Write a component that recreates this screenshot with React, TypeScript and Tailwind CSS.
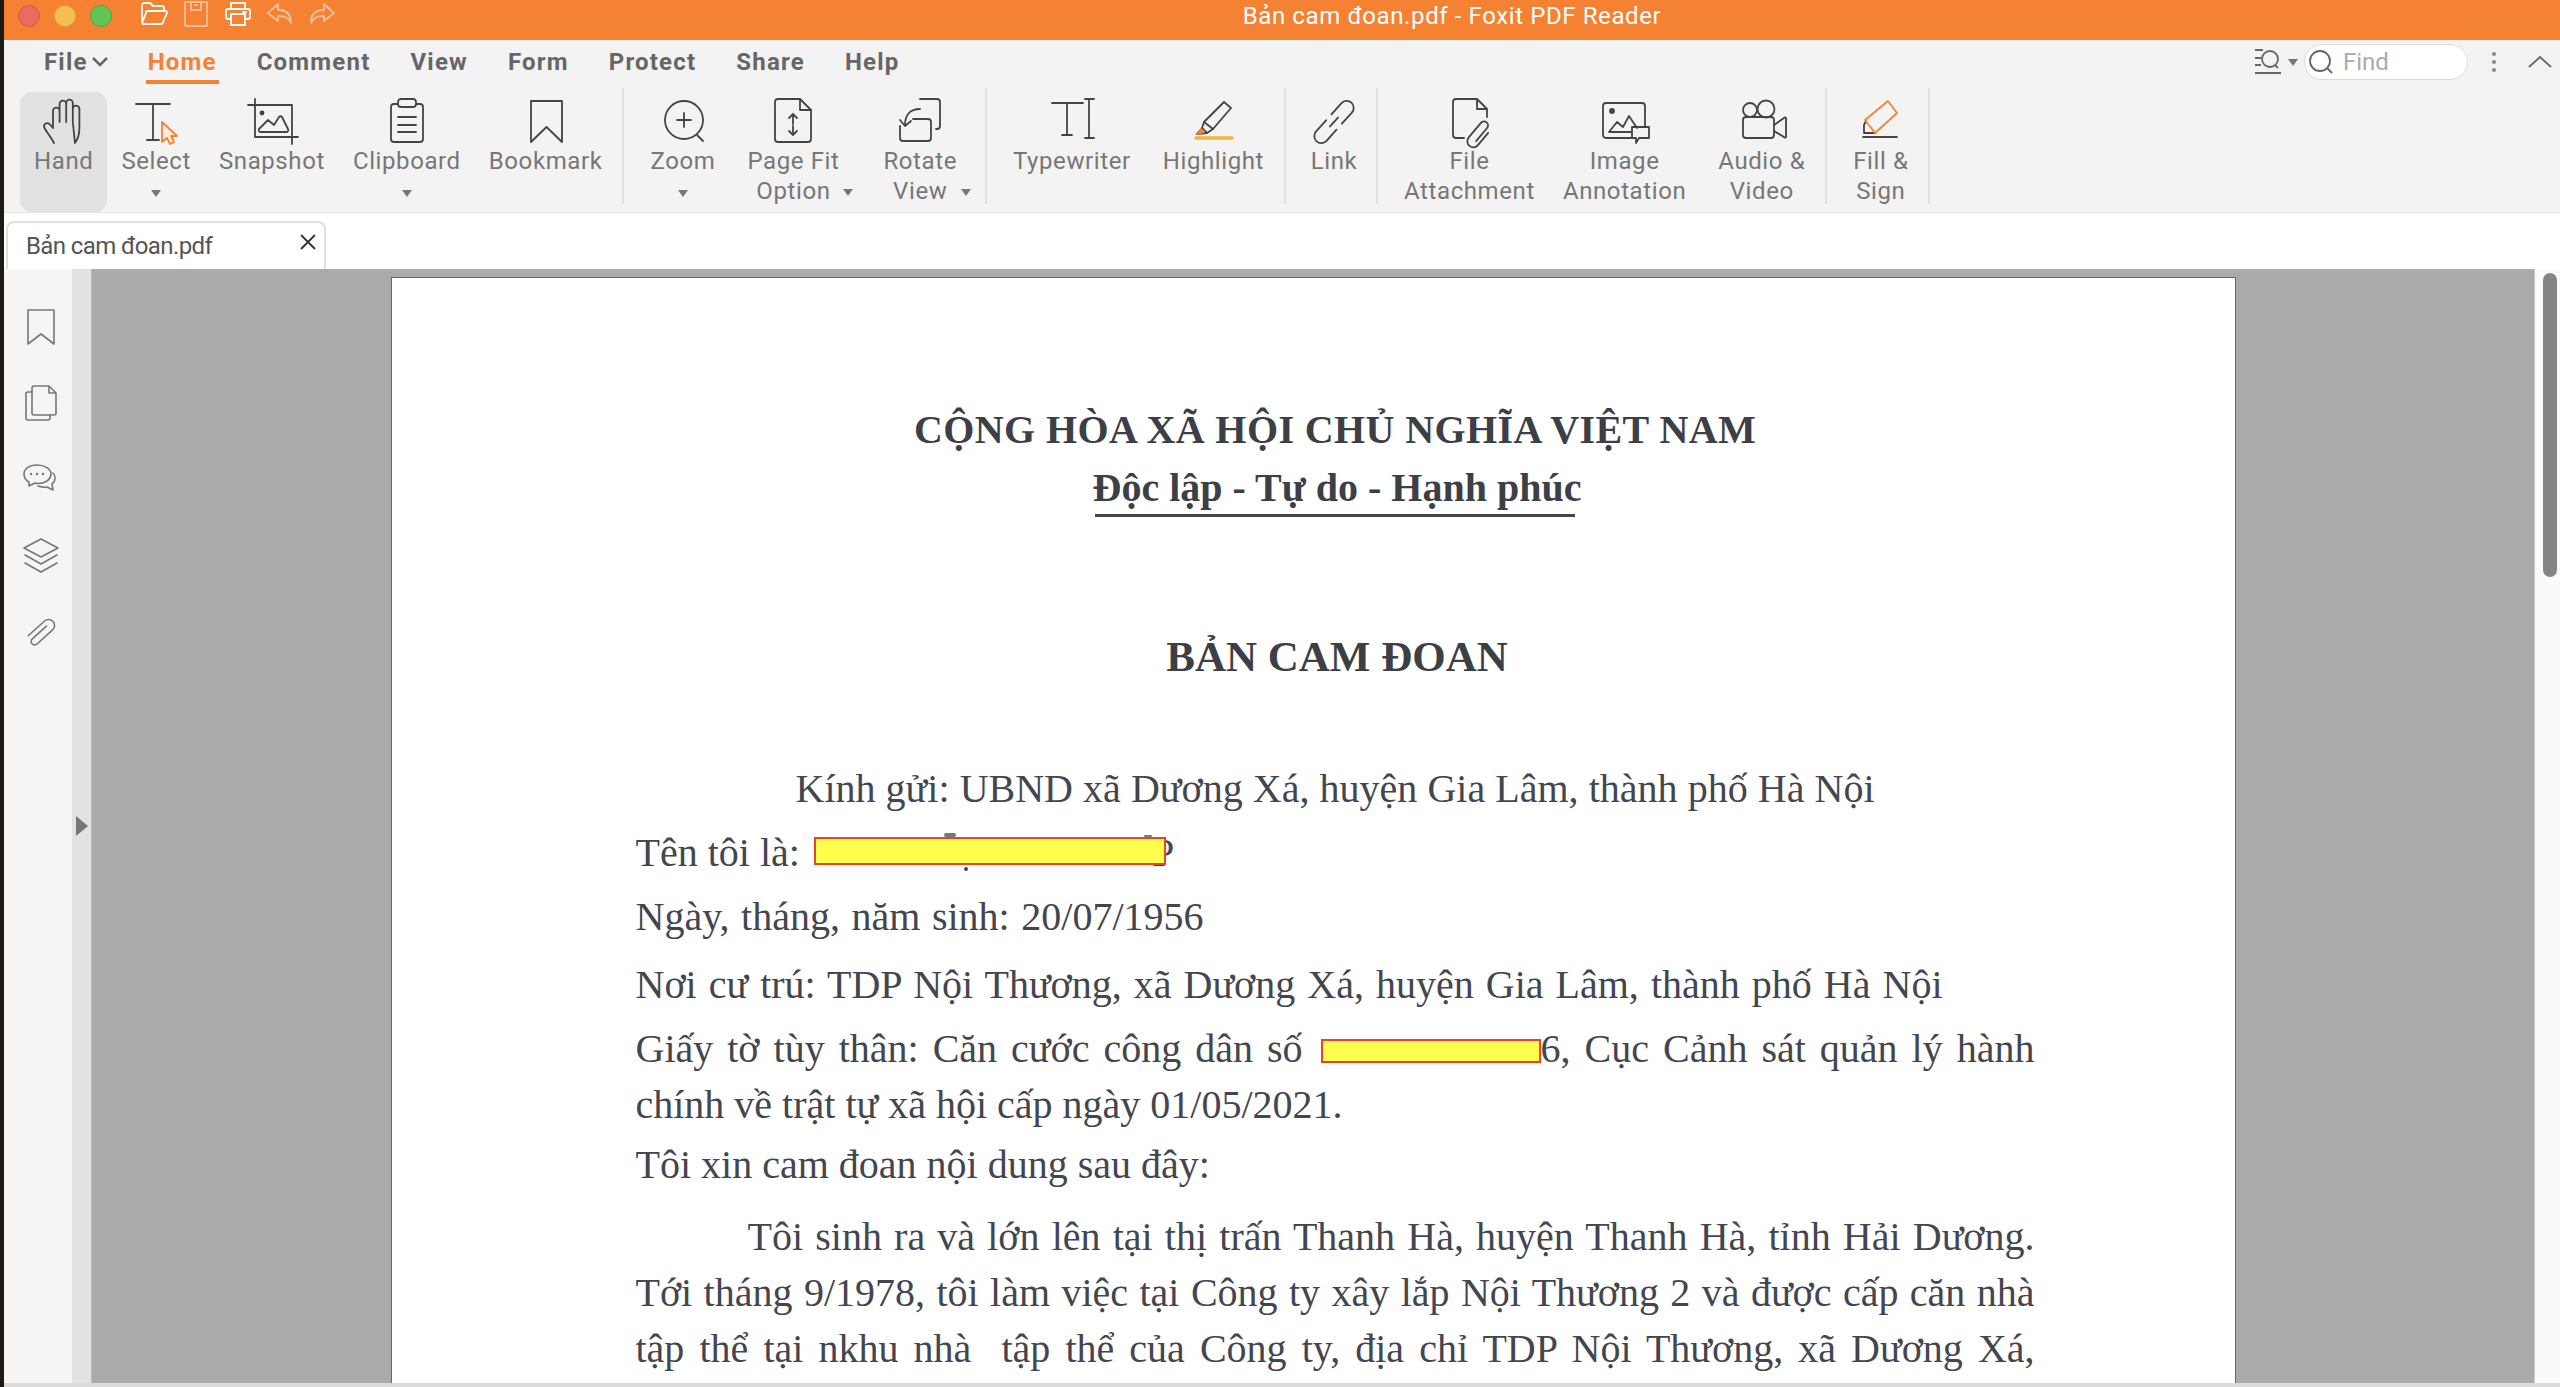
import type { ReactNode } from 'react'

const ORANGE = '#f58233'

function Icon({ children }: { children: ReactNode }) {
  return (
    <svg className="size-12 shrink-0 overflow-visible" viewBox="0 0 48 48" fill="none" stroke="#444" strokeWidth={1.8} strokeLinecap="round" strokeLinejoin="round">
      {children}
    </svg>
  )
}

function SideIcon({ children }: { children: ReactNode }) {
  return (
    <svg className="size-9 overflow-visible" viewBox="0 0 36 36" fill="none" stroke="#777" strokeWidth={1.6} strokeLinecap="round" strokeLinejoin="round">
      {children}
    </svg>
  )
}

function TitleIcon({ children, faded }: { children: ReactNode; faded?: boolean }) {
  return (
    <svg className={`size-7 ${faded ? 'opacity-50' : ''}`} viewBox="0 0 28 28" fill="none" stroke="#fff" strokeWidth={1.8} strokeLinecap="round" strokeLinejoin="round">
      {children}
    </svg>
  )
}

function Caret() {
  return (
    <svg className="h-2 w-2.5" viewBox="0 0 10 8" fill="#777">
      <path d="M0 1h10L5 8z" />
    </svg>
  )
}

type Tool = {
  lines: string[]
  icon: ReactNode
  caret?: 'below' | 'inline'
  active?: boolean
  className?: string
}

const TOOLS_A: Tool[] = [
  {
    lines: ['Hand'],
    active: true,
    icon: (
      <Icon>
        <path d="M14 45C11 39 7 35 4.5 30c-1.500-3 1.500-6.500 5-4l3.500 4V13a3.300 3.300 0 0 1 6.600 0v11M19.600 24V6a3.300 3.300 0 0 1 6.600 0v18M26.200 24V5a3.300 3.300 0 0 1 6.600 0v19M32.800 24V11a3.300 3.300 0 0 1 6.600 0v19c0 7-1.400 11-4.400 15z" />
      </Icon>
    ),
  },
  {
    lines: ['Select'],
    caret: 'below',
    icon: (
      <Icon>
        <path d="M4 6h34M21 6v36M15 42h12" />
        <path d="M30 24l15 14h-6l3 6-4 2-3-6-5 4z" stroke={ORANGE} fill="#fdeede" />
      </Icon>
    ),
  },
  {
    lines: ['Snapshot'],
    icon: (
      <Icon>
        <path d="M0 7h44v39M7 1v38h43" />
        <circle cx="14" cy="15" r="1.500" fill="#444" />
        <path d="M13 34a2 2 0 0 1-2-3l9-9 6 5 5-8c1-1 2-1 3 0l6 12a2 2 0 0 1-2 3z" />
      </Icon>
    ),
  },
  {
    lines: ['Clipboard'],
    caret: 'below',
    icon: (
      <Icon>
        <rect x="8" y="6" width="32" height="38" rx="3" />
        <rect x="15" y="1" width="18" height="8" rx="3" fill="#f3f3f3" />
        <path d="M15 19h18M15 27h18M15 34h18" />
      </Icon>
    ),
  },
  {
    lines: ['Bookmark'],
    icon: (
      <Icon>
        <path d="M9 3h31v41L24.500 29 9 44z" />
      </Icon>
    ),
  },
]

const TOOLS_B: Tool[] = [
  {
    lines: ['Zoom'],
    caret: 'below',
    icon: (
      <Icon>
        <circle cx="25" cy="22" r="19" />
        <path d="M25 15v14M18 22h14M38 37l6 6" />
      </Icon>
    ),
  },
  {
    lines: ['Page Fit', 'Option'],
    caret: 'inline',
    className: 'ml-1',
    icon: (
      <Icon>
        <path d="M9 1h22l11 11v29a3 3 0 0 1-3 3H9a3 3 0 0 1-3-3V4a3 3 0 0 1 3-3z" />
        <path d="M31 1v11h11M24 16v10M20 20l4-4 4 4M24 28v9M20 33l4 4 4-4" />
      </Icon>
    ),
  },
  {
    lines: ['Rotate', 'View'],
    caret: 'inline',
    className: 'ml-4 mr-2',
    icon: (
      <Icon>
        <path d="M24 1h17a3 3 0 0 1 3 3v24a3 3 0 0 1-3 3h-1" />
        <path d="M4 28v12a3 3 0 0 0 3 3h25a3 3 0 0 0 3-3V24a3 3 0 0 0-3-3H17" />
        <path d="M24 11C14 11 9 17 9 27M4 22l5 6 6-5" />
      </Icon>
    ),
  },
]

const TOOLS_C: Tool[] = [
  {
    lines: ['Typewriter'],
    icon: (
      <Icon>
        <path d="M4 5h31M19 5v32M14 37h10M41 1v39M37 1h9M37 40h9" />
      </Icon>
    ),
  },
  {
    lines: ['Highlight'],
    className: 'ml-1',
    icon: (
      <Icon>
        <path d="M35 4l7 6-18 21-9-7z" />
        <path d="M15 24l-2 6-5 6 10-1 6-4M13 30l5 5" />
        <path d="M9 36l3-5 3 3z" fill={ORANGE} stroke={ORANGE} />
        <path d="M7 40h36" stroke="#f6b13f" strokeWidth={3.500} />
      </Icon>
    ),
  },
]

const TOOLS_D: Tool[] = [
  {
    lines: ['Link'],
    className: '-mx-0.5',
    icon: (
      <Icon>
        <g transform="rotate(-48 24 24)">
          <path d="M20 17H5a7 7 0 0 0 0 14h15M28 17h15a7 7 0 0 1 0 14H28M18 24h12" />
        </g>
      </Icon>
    ),
  },
]

const TOOLS_E: Tool[] = [
  {
    lines: ['File', 'Attachment'],
    icon: (
      <Icon>
        <path d="M19 40h-8a3 3 0 0 1-3-3V4a3 3 0 0 1 3-3h21l10 10v8M32 1v10h10" />
        <g transform="rotate(-50 34 35)">
          <path d="M26 38h17a4 4 0 0 0 0-8H24a6 6 0 0 0 0 12h16" />
        </g>
      </Icon>
    ),
  },
  {
    lines: ['Image', 'Annotation'],
    icon: (
      <Icon>
        <path d="M30 40H5a3 3 0 0 1-3-3V8a3 3 0 0 1 3-3h36a3 3 0 0 1 3 3v20" />
        <circle cx="11" cy="13" r="2" fill="#444" />
        <path d="M8 34l8-10 6 5 6-11 8 12M8 34h22" />
        <path d="M31 29h17v11H38l-3 5v-5h-4z" />
      </Icon>
    ),
  },
  {
    lines: ['Audio &', 'Video'],
    className: 'ml-1',
    icon: (
      <Icon>
        <circle cx="12" cy="12" r="7" />
        <circle cx="28" cy="11" r="8.500" />
        <rect x="5" y="19" width="31" height="21" rx="3" />
        <path d="M36 27l10-7a1 1 0 0 1 2 1v17a1 1 0 0 1-2 1l-10-6" />
      </Icon>
    ),
  },
]

const TOOLS_F: Tool[] = [
  {
    lines: ['Fill &', 'Sign'],
    icon: (
      <Icon>
        <path d="M18 35H7v-8l2-4M6 39h34" />
        <path d="M31 3l9 12-22 20-10-13z" stroke={ORANGE} />
      </Icon>
    ),
  },
]

function ToolButton({ tool }: { tool: Tool }) {
  return (
    <div className={`flex h-30 flex-col items-center rounded-xl px-3.5 pt-1.5 ${tool.active ? 'bg-[#e2e2e2]' : ''} ${tool.className ?? ''}`}>
      {tool.icon}
      <div className="whitespace-nowrap text-center text-2xl leading-7.5 tracking-wide text-[#777]">
        {tool.lines.map((line, i) => (
          <div key={line} className="relative">
            {line}
            {tool.caret === 'inline' && i === 1 && (
              <span className="absolute left-full top-3 ml-1 flex">
                <Caret />
              </span>
            )}
          </div>
        ))}
        {tool.caret === 'below' && (
          <div className="flex h-7.5 items-center justify-center pt-1">
            <Caret />
          </div>
        )}
      </div>
    </div>
  )
}

function Divider() {
  return <div className="mb-2 ml-1.5 mr-3 mt-[-4px] h-29 w-0.5 self-start bg-[#e2e2e2]" />
}

function ToolGroup({ tools }: { tools: Tool[] }) {
  return (
    <>
      {tools.map(t => (
        <ToolButton key={t.lines[0]} tool={t} />
      ))}
    </>
  )
}

const Redacted = ({ className, children }: { className: string; children?: ReactNode }) => (
  <span className={`relative z-10 inline-block border-2 border-[#e8432b] bg-[#ffff4d] align-middle ${className}`}>{children}</span>
)

export default function App() {
  return (
    <div className="flex h-screen flex-col overflow-hidden bg-stone-900 pl-1 font-['Roboto',sans-serif]">
      {/* Title bar */}
      <div className="flex h-10 shrink-0 items-center bg-[#f58233] pb-2">
        <div className="flex items-center gap-3.5 pl-3.5">
          <span className="size-5.5 rounded-full border border-[#d9574c] bg-[#ee6a5f]" />
          <span className="size-5.5 rounded-full border border-[#d9a53f] bg-[#f5bf4f]" />
          <span className="size-5.5 rounded-full border border-[#4fa845] bg-[#61c454]" />
        </div>
        <div className="ml-7 flex items-center gap-3.5 pb-1">
          <TitleIcon>
            <path d="M2 21V5a2 2 0 0 1 2-2h6l3 3h9a2 2 0 0 1 2 2v3" />
            <path d="M2 23l4-10a2 2 0 0 1 2-2h17a2 2 0 0 1 2 2l-4 9a2 2 0 0 1-2 2H4a2 2 0 0 1-2-1z" />
          </TitleIcon>
          <TitleIcon faded>
            <rect x="3" y="2" width="22" height="24" rx="1" />
            <path d="M9 2v8h10V2M13 5h2" />
          </TitleIcon>
          <TitleIcon>
            <path d="M7 9V3h14v6M7 19H4a2 2 0 0 1-2-2v-6a2 2 0 0 1 2-2h20a2 2 0 0 1 2 2v6a2 2 0 0 1-2 2h-3" />
            <rect x="7" y="14" width="14" height="11" />
            <path d="M19 12h3" />
          </TitleIcon>
          <TitleIcon faded>
            <path d="M12 4L2 13l10 8v-5c6 0 10 1 13 7 0-8-4-13-13-13z" />
          </TitleIcon>
          <TitleIcon faded>
            <path d="M16 4l10 9-10 8v-5c-6 0-10 1-13 7 0-8 4-13 13-13z" />
          </TitleIcon>
        </div>
        <div className="ml-2 flex-1 text-center text-2xl tracking-wide text-[#fff]">Bản cam đoan.pdf - Foxit PDF Reader</div>
      </div>

      {/* Ribbon */}
      <div className="shrink-0 border-b border-[#e6e6e6] bg-[#f3f3f3]">
        <div className="flex h-13 items-center justify-between pb-2 pl-10 pr-2">
          <nav className="flex items-center gap-10 text-2xl font-bold tracking-wider text-[#666]">
            <span className="flex items-center gap-1">
              File
              <svg className="h-2.5 w-4" viewBox="0 0 16 10" fill="none" stroke="#666" strokeWidth={2.500}>
                <path d="M1 1l7 7 7-7" />
              </svg>
            </span>
            <span className="relative text-[#f58233]">
              Home
              <span className="absolute -inset-x-0.5 -bottom-1.5 h-1 bg-[#f58233]" />
            </span>
            <span>Comment</span>
            <span>View</span>
            <span>Form</span>
            <span>Protect</span>
            <span>Share</span>
            <span>Help</span>
          </nav>
          <div className="flex items-center">
            <svg className="size-7" viewBox="0 0 28 28" fill="none" stroke="#666" strokeWidth={1.800}>
              <path d="M1 2h8M1 10h6M1 17h6M1 25h26" />
              <circle cx="16" cy="11" r="8" />
              <path d="M21 17l3 3" />
            </svg>
            <span className="ml-1.5 flex">
              <Caret />
            </span>
            <div className="ml-1.5 flex h-9 w-41 items-center gap-2.5 rounded-full border border-[#dcdcdc] bg-white pl-1">
              <svg className="size-6" viewBox="0 0 24 24" fill="none" stroke="#666" strokeWidth={1.800}>
                <circle cx="11" cy="11" r="10" />
                <path d="M18 18l5 5" />
              </svg>
              <span className="text-2xl text-[#aaa]">Find</span>
            </div>
            <div className="ml-6 flex flex-col gap-1">
              <span className="size-1 rounded-full bg-[#888]" />
              <span className="size-1 rounded-full bg-[#888]" />
              <span className="size-1 rounded-full bg-[#888]" />
            </div>
            <svg className="ml-8 h-3 w-6" viewBox="0 0 24 12" fill="none" stroke="#666" strokeWidth={1.800}>
              <path d="M1 11L12 1l11 10" />
            </svg>
          </div>
        </div>
        <div className="flex h-30 pl-4">
          <ToolGroup tools={TOOLS_A} />
          <Divider />
          <ToolGroup tools={TOOLS_B} />
          <Divider />
          <ToolGroup tools={TOOLS_C} />
          <Divider />
          <ToolGroup tools={TOOLS_D} />
          <Divider />
          <ToolGroup tools={TOOLS_E} />
          <Divider />
          <ToolGroup tools={TOOLS_F} />
          <Divider />
        </div>
      </div>

      {/* Tabs */}
      <div className="flex h-14 shrink-0 bg-white pl-0.5 pt-2">
        <div className="flex w-80 items-center justify-between rounded-t-lg border-x-2 border-t-2 border-[#e0e0e0] bg-white pl-4.5 pr-2 text-2xl tracking-tight text-[#555]">
          <span>Bản cam đoan.pdf</span>
          <svg className="mb-2 size-4" viewBox="0 0 16 16" fill="none" stroke="#333" strokeWidth={1.800}>
            <path d="M1 1l14 14M15 1L1 15" />
          </svg>
        </div>
      </div>

      {/* Body */}
      <div className="flex min-h-0 flex-1 border-b-4 border-[#dcdcdc] bg-[#aaaaaa]">
        <aside className="flex w-17 shrink-0 flex-col items-center gap-10 bg-[#f5f5f5] pl-1.5 pt-10">
          <SideIcon>
            <path d="M5 1h26v34L18 25 5 35z" />
          </SideIcon>
          <SideIcon>
            <path d="M9 28V3a2 2 0 0 1 2-2h15l7 7v20a2 2 0 0 1-2 2H11a2 2 0 0 1-2-2zM26 1v7h7" />
            <path d="M9 7H5a2 2 0 0 0-2 2v24a2 2 0 0 0 2 2h20a2 2 0 0 0 2-2v-3" />
          </SideIcon>
          <SideIcon>
            <g transform="translate(0 -2)">
              <path d="M14 6C6 6 1 10 1 15c0 4 3 7 5 8v4l6-3c1 .5 2 .5 3 .5 8 0 13-4.500 13-9.500S22 6 14 6z" />
              <path d="M30 14c3 3 3 8-1 11l1 6-6-3c-3 .5-6 0-9-1" />
              <path d="M8 15h.01M14 15h.01M20 15h.01" strokeWidth={2.500} />
            </g>
          </SideIcon>
          <SideIcon>
            <path d="M18 2l17 9-17 9-17-9zM2 18l16 9 16-9M2 26l16 9 16-9" />
          </SideIcon>
          <SideIcon>
            <g transform="translate(0 4) rotate(-42 18 18)">
              <path d="M28 15H9a3.500 3.500 0 0 0 0 7h21a6 6 0 0 0 0-12H8" />
            </g>
          </SideIcon>
        </aside>
        <div className="flex w-5 shrink-0 items-center justify-center border-r border-[#bbb] bg-[#e2e2e2]">
          <svg className="h-5 w-3" viewBox="0 0 12 20" fill="#777">
            <path d="M0 0l12 10L0 20z" />
          </svg>
        </div>

        <main className="flex min-w-0 flex-1 justify-center overflow-hidden pt-2">
          <div className="w-[1845px] shrink-0 border-x border-t border-[#666] bg-white pl-61 pr-50 pt-33 font-['Liberation_Serif',serif] text-[40px] leading-10 text-[#44464f]">
            <div className="whitespace-nowrap text-center font-bold tracking-[0.01em] text-[#3d3f47]">CỘNG HÒA XÃ HỘI CHỦ NGHĨA VIỆT NAM</div>
            <div className="mt-4.5 whitespace-nowrap pl-1 text-center font-bold text-[#3d3f47]">Độc lập - Tự do - Hạnh phúc</div>
            <div className="mx-auto mt-1.5 h-0.75 w-120 bg-[#44464f]" />
            <div className="mt-30 pl-1 text-center text-[43px] font-bold text-[#3d3f47]">BẢN CAM ĐOAN</div>

            <div className="mr-40 mt-23 pl-40 text-justify [text-align-last:justify]">Kính gửi: UBND xã Dương Xá, huyện Gia Lâm, thành phố Hà Nội</div>
            <div className="mt-6">
              Tên tôi là:{' '}
              <Redacted className="ml-1 h-7 w-88 -translate-y-1.5">
                <span className="absolute -bottom-2 left-37 size-1 rounded-full bg-[#44464f]" />
                <span className="absolute -top-1.5 left-32 h-1 w-3 rounded-full bg-[#77787f]" />
                <span className="absolute -top-1 right-3 h-0.5 w-2 rounded-full bg-[#77787f]" />
              </Redacted>
              <span className="-ml-3.5">P</span>
            </div>
            <div className="mt-6 w-142 text-justify [text-align-last:justify]">Ngày, tháng, năm sinh: 20/07/1956</div>
            <div className="mr-23 mt-7 text-justify [text-align-last:justify]">Nơi cư trú: TDP Nội Thương, xã Dương Xá, huyện Gia Lâm, thành phố Hà Nội</div>
            <div className="mt-6 text-justify [text-align-last:justify]">
              Giấy tờ tùy thân: Căn cước công dân số <Redacted className="ml-1 h-6 w-55 -translate-y-0.5" />6, Cục Cảnh sát quản lý hành
            </div>
            <div className="mt-4">chính về trật tự xã hội cấp ngày 01/05/2021.</div>
            <div className="mt-5">Tôi xin cam đoan nội dung sau đây:</div>
            <div className="mt-8 pl-28 text-justify [text-align-last:justify]">Tôi sinh ra và lớn lên tại thị trấn Thanh Hà, huyện Thanh Hà, tỉnh Hải Dương.</div>
            <div className="mt-4 text-justify [text-align-last:justify]">Tới tháng 9/1978, tôi làm việc tại Công ty xây lắp Nội Thương 2 và được cấp căn nhà</div>
            <div className="mt-4 text-justify [text-align-last:justify]">tập thể tại nkhu nhà{'\u00a0'} tập thể của Công ty, địa chỉ TDP Nội Thương, xã Dương Xá,</div>
          </div>
        </main>

        <div className="w-6.5 shrink-0 border-l border-[#c8c8c8] bg-[#fafafa] pl-2 pt-1">
          <div className="h-76 w-3.5 rounded-full bg-[#858585]" />
        </div>
      </div>
    </div>
  )
}
